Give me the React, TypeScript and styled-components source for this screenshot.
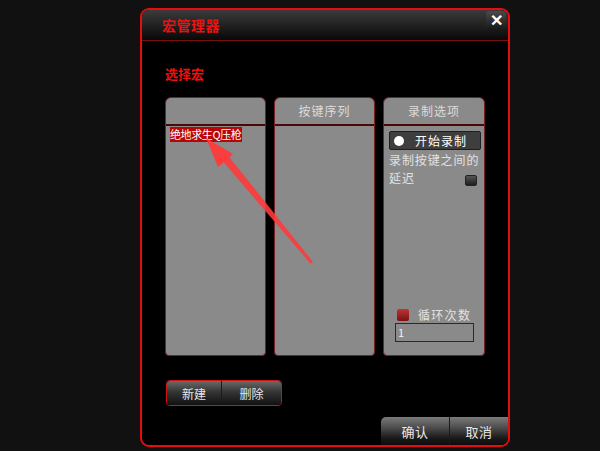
import React from "react";
import styled, { createGlobalStyle } from "styled-components";

const Global = createGlobalStyle`
  html, body { margin: 0; padding: 0; background: #111111; }
  body { width: 600px; height: 451px; overflow: hidden; font-family: "Noto Sans CJK SC", "Noto Sans", sans-serif; }
  * { box-sizing: border-box; }
`;

const Page = styled.div`
  position: relative;
  width: 600px;
  height: 451px;
  padding: 8px 0 0 140px;
`;

const Dialog = styled.div`
  width: 370px;
  height: 439px;
  border: 2px solid #e80c0c;
  border-radius: 9px;
  background: #000;
  display: flex;
  flex-direction: column;
  overflow: hidden;
`;

const TitleBar = styled.div`
  height: 31px;
  flex: none;
  display: flex;
  align-items: flex-start;
  justify-content: space-between;
  padding-left: 20px;
  background: linear-gradient(#3b3b3b 0%, #1f1f1f 55%, #080808 100%);
  border-bottom: 1px solid #7a1010;
`;

const Title = styled.div`
  color: #f01010;
  font-size: 14px;
  font-weight: 700;
  line-height: 31px;
  letter-spacing: 0.5px;
`;

const CloseBtn = styled.div`
  width: 20px;
  height: 20px;
  margin: 1px 2px 0 0;
  border-radius: 3px;
  background: linear-gradient(#4a4a4a, #151515);
  color: #fff;
  font-family: "Liberation Sans", Arial, sans-serif;
  font-weight: 700;
  font-size: 16px;
  line-height: 20px;
  text-align: center;
`;

const Body = styled.div`
  flex: 1;
  display: flex;
  flex-direction: column;
  padding-left: 23px;
`;

const Heading = styled.div`
  margin-top: 25px;
  height: 16px;
  line-height: 16px;
  color: #f01010;
  font-size: 13px;
  font-weight: 700;
`;

const PanelRow = styled.div`
  margin-top: 15px;
  display: flex;
  gap: 8px;
  height: 259px;
`;

const Panel = styled.div<{ $w: number }>`
  width: ${(p) => p.$w}px;
  height: 100%;
  background: #8a8a8a;
  border: 1px solid #7a2222;
  border-radius: 6px 6px 4px 4px;
  display: flex;
  flex-direction: column;
`;

const PanelHead = styled.div`
  height: 28px;
  flex: none;
  border-bottom: 2px solid #4a0808;
  color: #dcdcdc;
  font-size: 12px;
  line-height: 26px;
  text-align: center;
  letter-spacing: 1px;
`;

const PanelBody = styled.div`
  flex: 1;
  display: flex;
  flex-direction: column;
  align-items: flex-start;
  padding: 1px 0 0 4px;
`;

const ListItem = styled.div<{ $selected?: boolean }>`
  background: ${(p) => (p.$selected ? "#b80606" : "transparent")};
  color: #fff;
  font-size: 11px;
  line-height: 15px;
  height: 15px;
  padding-right: 1px;
  letter-spacing: -0.4px;
  white-space: nowrap;
`;

const Options = styled.div`
  flex: 1;
  display: flex;
  flex-direction: column;
  padding: 5px 3px 0 5px;
`;

const RecordBtn = styled.div`
  height: 19px;
  display: flex;
  align-items: center;
  gap: 11px;
  padding-left: 4px;
  background: #3e3e3e;
  border: 1px solid #1e1e1e;
  border-radius: 2px;
  color: #fff;
  font-size: 12px;
  letter-spacing: 1px;
`;

const Dot = styled.span`
  width: 10px;
  height: 10px;
  border-radius: 50%;
  background: #fff;
`;

const Note = styled.div`
  margin-top: 2px;
  color: #e2e2e2;
  font-size: 12px;
  line-height: 16px;
  letter-spacing: 0.9px;
  white-space: nowrap;
`;

const NoteRow = styled.div`
  display: flex;
  justify-content: space-between;
  align-items: flex-end;
`;

const DarkCheck = styled.span`
  width: 12px;
  height: 11px;
  margin: 0 4px 0 0;
  border-radius: 2px;
  background: linear-gradient(#555, #1e1e1e);
  border: 1px solid #222;
`;

const Spacer = styled.div`
  flex: 1;
`;

const LoopRow = styled.div`
  display: flex;
  align-items: center;
  gap: 9px;
  padding-left: 8px;
  color: #e2e2e2;
  font-size: 12px;
  letter-spacing: 1.3px;
  height: 15px;
`;

const RedCheck = styled.span`
  width: 12px;
  height: 12px;
  border-radius: 2px;
  background: linear-gradient(#c03434, #7a1010);
`;

const CountInput = styled.div`
  margin: 1px 0 13px 6px;
  width: 79px;
  height: 19px;
  border: 1px solid #2a2a2a;
  color: #f4f4f4;
  font-size: 11px;
  line-height: 16px;
  padding-left: 2px;
`;

const ButtonGroup = styled.div<{ $red?: boolean }>`
  display: flex;
  height: ${(p) => (p.$red ? 26 : 28)}px;
  border: ${(p) => (p.$red ? "1px solid #d01414" : "none")};
  border-radius: ${(p) => (p.$red ? "4px" : "5px 0 0 0")};
  overflow: hidden;
`;

const GroupBtn = styled.div<{ $w: number; $light?: boolean }>`
  width: ${(p) => p.$w}px;
  display: flex;
  align-items: center;
  justify-content: center;
  color: #e8e8e8;
  font-size: 12px;
  background: ${(p) =>
    p.$light
      ? "linear-gradient(#7a7a7a 0%, #4a4a4a 40%, #1a1a1a 75%, #0c0c0c 100%)"
      : "linear-gradient(#6a6a6a 0%, #353535 45%, #111 100%)"};
  & + & {
    border-left: 1px solid #1a1a1a;
  }
`;

const NewDelete = styled(ButtonGroup)`
  margin: 24px 0 0 1px;
  align-self: flex-start;
`;

const OkCancel = styled(ButtonGroup)`
  margin-top: auto;
  align-self: flex-end;
  font-size: 13px;
`;

const BigLabel = styled.span`
  font-size: 13px;
  letter-spacing: 0.5px;
`;

const ArrowLayer = styled.svg`
  position: absolute;
  left: 0;
  top: 0;
  pointer-events: none;
`;

export default function App() {
  return (
    <Page>
      <Global />
      <Dialog>
        <TitleBar>
          <Title>宏管理器</Title>
          <CloseBtn>✕</CloseBtn>
        </TitleBar>
        <Body>
          <Heading>选择宏</Heading>
          <PanelRow>
            <Panel $w={101}>
              <PanelHead />
              <PanelBody>
                <ListItem $selected>绝地求生Q压枪</ListItem>
              </PanelBody>
            </Panel>
            <Panel $w={101}>
              <PanelHead>按键序列</PanelHead>
            </Panel>
            <Panel $w={102}>
              <PanelHead>录制选项</PanelHead>
              <Options>
                <RecordBtn>
                  <Dot />
                  开始录制
                </RecordBtn>
                <Note>录制按键之间的</Note>
                <NoteRow>
                  <Note>延迟</Note>
                  <DarkCheck />
                </NoteRow>
                <Spacer />
                <LoopRow>
                  <RedCheck />
                  循环次数
                </LoopRow>
                <CountInput>1</CountInput>
              </Options>
            </Panel>
          </PanelRow>
          <NewDelete $red>
            <GroupBtn $w={54}>新建</GroupBtn>
            <GroupBtn $w={60}>删除</GroupBtn>
          </NewDelete>
          <OkCancel>
            <GroupBtn $w={68} $light>
              <BigLabel>确认</BigLabel>
            </GroupBtn>
            <GroupBtn $w={59} $light>
              <BigLabel>取消</BigLabel>
            </GroupBtn>
          </OkCancel>
        </Body>
      </Dialog>
      <ArrowLayer width="600" height="451" viewBox="0 0 600 451">
        <polygon
          points="313,262 310.5,263.5 220,158 226,153"
          fill="#ff3a3a"
          opacity="0.9"
        />
        <polygon points="206,138 233,154 218,167" fill="#ff3a3a" opacity="0.95" />
      </ArrowLayer>
    </Page>
  );
}
